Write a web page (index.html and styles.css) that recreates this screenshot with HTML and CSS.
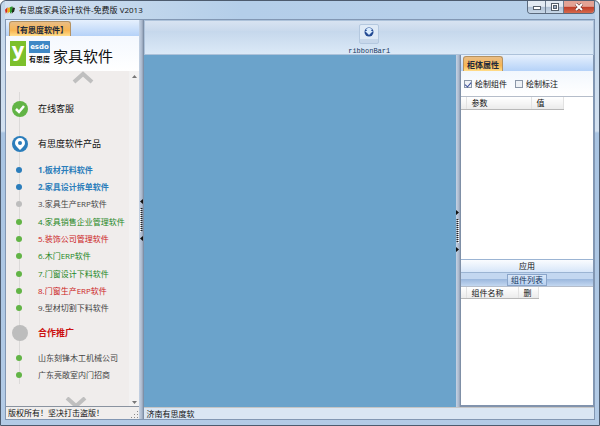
FILE: index.html
```html
<!DOCTYPE html>
<html lang="zh-CN">
<head>
  <meta charset="UTF-8">
  <title>有思度家具设计软件</title>
  <link rel="stylesheet" href="styles.css">
</head>
<body>
<div class="window">
  <header class="titlebar">
    <svg class="app-icon" width="10" height="9" viewBox="0 0 12 10">
      <path d="M0 4l3-3v5l-2 3z" fill="#d92b1c"/>
      <path d="M3 2l3-1v5l-3 3z" fill="#e8b21c"/>
      <path d="M6 1l3-1v6l-3 3z" fill="#2d9b2f"/>
      <path d="M9 1l3 1-1 4-3 3z" fill="#222a1c"/>
    </svg>
    <h1 class="title">有思度家具设计软件-免费版 V2013</h1>
    <div class="win-buttons">
      <button class="win-btn" aria-label="最小化">
        <svg width="10" height="8" viewBox="0 0 10 8"><rect x="1.500" y="3.500" width="7" height="3" fill="#fff" stroke="#56606c"/></svg>
      </button>
      <button class="win-btn" aria-label="最大化">
        <svg width="10" height="8" viewBox="0 0 10 8"><rect x="1.500" y=".5" width="7" height="7" fill="#fff" stroke="#56606c"/><rect x="3.500" y="2.500" width="3" height="3" fill="#9fb0c4" stroke="#56606c"/></svg>
      </button>
      <button class="win-btn win-close" aria-label="关闭">
        <svg width="10" height="8" viewBox="0 0 10 8"><path d="M2 1l6 6M8 1L2 7" stroke="#5a2a2a" stroke-width="3"/><path d="M2 1l6 6M8 1L2 7" stroke="#fff" stroke-width="2"/></svg>
      </button>
    </div>
  </header>

  <div class="content">
    <aside class="sidebar">
      <div class="tabs"><button class="tab">【有思度软件】</button></div>
      <div class="brand">
        <span class="brand-y">y</span>
        <span class="brand-small">
          <span class="brand-esdo">esdo</span>
          <span class="brand-cn">有思度</span>
        </span>
        <span class="brand-name">家具软件</span>
      </div>
      <div class="nav">
        <div class="nav-main">
          <svg class="arrow" width="22" height="13" viewBox="0 0 22 13"><path d="M2 11l9-8 9 8" fill="none" stroke="#bfbfbf" stroke-width="4"/></svg>
          <ul class="timeline">
            <li class="group">
              <svg class="mark" width="16" height="16" viewBox="0 0 16 16"><circle cx="8" cy="8" r="8" fill="#62b446"/><path d="M4 8l3 3 5-6" fill="none" stroke="#fff" stroke-width="2.500"/></svg>
              <a href="#">在线客服</a>
            </li>
            <li class="group">
              <svg class="mark" width="16" height="16" viewBox="0 0 16 16"><circle cx="8" cy="8" r="8" fill="#2b7dbb"/><path d="M8 14C5 11 3 9.500 3 7a5 5 0 0 1 10 0c0 2.500-2 4-5 7z" fill="#fff"/><circle cx="8" cy="7" r="2" fill="#2b7dbb"/></svg>
              <a href="#">有思度软件产品</a>
            </li>
            <li class="item blue"><i class="dot"></i><a href="#">1.板材开料软件</a></li>
            <li class="item blue"><i class="dot"></i><a href="#">2.家具设计拆单软件</a></li>
            <li class="item gray"><i class="dot"></i><a href="#">3.家具生产ERP软件</a></li>
            <li class="item green"><i class="dot"></i><a href="#">4.家具销售企业管理软件</a></li>
            <li class="item red"><i class="dot"></i><a href="#">5.装饰公司管理软件</a></li>
            <li class="item green"><i class="dot"></i><a href="#">6.木门ERP软件</a></li>
            <li class="item green"><i class="dot"></i><a href="#">7.门窗设计下料软件</a></li>
            <li class="item red"><i class="dot"></i><a href="#">8.门窗生产ERP软件</a></li>
            <li class="item"><i class="dot"></i><a href="#">9.型材切割下料软件</a></li>
            <li class="group promo">
              <svg class="mark" width="16" height="16" viewBox="0 0 16 16"><circle cx="8" cy="8" r="8" fill="#bdbdbd"/></svg>
              <a href="#">合作推广</a>
            </li>
            <li class="item"><i class="dot"></i><a href="#">山东刻锋木工机械公司</a></li>
            <li class="item"><i class="dot"></i><a href="#">广东亮敞室内门招商</a></li>
          </ul>
          <svg class="arrow arrow-down" width="22" height="9" viewBox="0 0 22 9"><path d="M2 1l9 8 9-8" fill="none" stroke="#bfbfbf" stroke-width="4"/></svg>
        </div>
        <div class="scrollbar">
          <svg width="5" height="3" viewBox="0 0 5 3"><path d="M0 3l2.500-3L5 3z" fill="#777"/></svg>
          <svg width="5" height="3" viewBox="0 0 5 3"><path d="M0 0l2.500 3L5 0z" fill="#777"/></svg>
        </div>
      </div>
      <div class="status">
        <span>版权所有！坚决打击盗版！</span>
        <svg width="8" height="8" viewBox="0 0 8 8"><path d="M6 0h1v1h-1zM3 3h1v1h-1zM6 3h1v1h-1zM0 6h1v1h-1zM3 6h1v1h-1zM6 6h1v1h-1z" fill="#8a8a8a"/></svg>
      </div>
    </aside>

    <div class="splitter">
      <svg width="4" height="42" viewBox="0 0 4 42"><path d="M4 0v5L1 2.500zM4 37v5L1 39.500z" fill="#111"/><path d="M1.500 9v24" stroke="#fff" stroke-width="1"/><path d="M2.500 9v24" stroke="#222" stroke-width="2" stroke-dasharray="1 1"/></svg>
    </div>

    <div class="workspace">
      <div class="ribbon">
        <button class="ribbon-btn" aria-label="ribbonBar1">
          <svg width="10" height="10" viewBox="0 0 10 10"><circle cx="5" cy="5" r="4.500" fill="#244b94"/><path d="M2 2l2-1h2l2 1-1 2h2L5 8 1 4h2z" fill="#d9ecff"/></svg>
        </button>
        <span class="ribbon-label">ribbonBar1</span>
      </div>
      <div class="work">
        <main class="canvas"></main>
        <div class="splitter">
          <svg width="4" height="42" viewBox="0 0 4 42"><path d="M0 0v5l3-2.500zM0 37v5l3-2.500z" fill="#111"/><path d="M2.500 9v24" stroke="#fff" stroke-width="1"/><path d="M1.500 9v24" stroke="#222" stroke-width="2" stroke-dasharray="1 1"/></svg>
        </div>
        <aside class="props">
          <div class="tabs"><button class="tab tab-props">柜体属性</button></div>
          <div class="checks">
            <label><input type="checkbox" checked>绘制组件</label>
            <label><input type="checkbox">绘制标注</label>
          </div>
          <div class="grid-box params">
            <table class="grid">
              <tr><th class="handle"></th><th class="col-param">参数</th><th class="col-value">值</th></tr>
            </table>
          </div>
          <button class="apply">应用</button>
          <div class="list-head"><button class="list-title">组件列表</button></div>
          <div class="grid-box parts">
            <table class="grid">
              <tr><th class="handle"></th><th class="col-name">组件名称</th><th class="col-del">删</th></tr>
            </table>
          </div>
        </aside>
      </div>
      <footer class="footer">济南有思度软</footer>
    </div>
  </div>
</div>
</body>
</html>
```

FILE: styles.css
```css
* {
  box-sizing: border-box;
  margin: 0;
  padding: 0;
}
html,
body {
  height: 100%;
}
body {
  font: 8px/12px "Open Sans", "Noto Sans CJK SC", sans-serif;
  color: #111;
  overflow: hidden;
}
button {
  font: inherit;
  color: inherit;
  border: 0;
  background: none;
}
a {
  color: inherit;
  text-decoration: none;
}
ul {
  list-style: none;
}
svg {
  display: block;
  flex: none;
}

.window {
  display: flex;
  flex-direction: column;
  height: 100vh;
  padding: 0 4px 5px;
  border: 1px solid #4d5b6e;
  border-radius: 6px 6px 0 0;
  background: linear-gradient(#c2d6eb, #d3e1f0 130px, #a9c4e2 132px, #b3cbe6);
}

/* title bar */
.titlebar {
  display: flex;
  align-items: center;
  height: 18px;
  flex: none;
  background: linear-gradient(90deg, #d3e1f0, #b4cee9 40%, #b8d0e9);
}
.app-icon {
  margin-right: 4px;
}
.title {
  flex: 1;
  font-size: 8px;
  font-weight: normal;
  line-height: 16px;
}
.win-buttons {
  display: flex;
  align-self: flex-start;
  height: 13px;
  border: 1px solid #5b6a7d;
  border-top: 0;
  border-radius: 0 0 4px 4px;
  overflow: hidden;
}
.win-btn {
  display: flex;
  align-items: center;
  justify-content: center;
  width: 18px;
  border-right: 1px solid #6c7b8e;
  background: linear-gradient(#e2eaf3 45%, #aebfd3 50%, #c9d8e8);
}
.win-close {
  width: 30px;
  border-right: 0;
  background: linear-gradient(#e3a294 45%, #bf3b26 50%, #d5694d);
}

.content {
  display: flex;
  flex: 1;
  min-height: 0;
  border: 1px solid #8297b3;
}

/* left side */
.sidebar {
  display: flex;
  flex-direction: column;
  flex: 0 0 22.7%;
  min-width: 0;
}
.tabs {
  display: flex;
  align-items: flex-end;
  height: 16px;
  flex: none;
  padding-left: 3px;
  background: linear-gradient(#e6f0fd, #b5d2f8);
}
.tab {
  height: 15px;
  padding: 0 2px;
  border: 1px solid #b69260;
  border-bottom: 0;
  border-radius: 3px 3px 0 0;
  background: linear-gradient(#e9bd86, #f7b553 60%, #ffdd8a);
  font-weight: bold;
  line-height: 13px;
  color: #222a3c;
}
.tab-props {
  margin-left: -1px;
  padding: 0 3px;
}
.brand {
  display: flex;
  align-items: center;
  gap: 3px;
  height: 35px;
  flex: none;
  padding-left: 4px;
  background: linear-gradient(#f4f8fe, #fff);
  white-space: nowrap;
}
.brand-y {
  width: 16px;
  height: 25px;
  background: #7cc02c;
  color: #fff;
  font: bold 20px/18px "DejaVu Sans", sans-serif;
  text-align: center;
}
.brand-small {
  display: flex;
  flex-direction: column;
  width: 21px;
}
.brand-esdo {
  height: 12px;
  background: #3f88c5;
  color: #fff;
  font: bold 7px/12px "DejaVu Sans", sans-serif;
  text-align: center;
}
.brand-cn {
  font-size: 7px;
  font-weight: bold;
  line-height: 13px;
}
.brand-name {
  font-size: 15px;
  line-height: 24px;
  padding-top: 5px;
}
.nav {
  display: flex;
  flex: 1;
  min-height: 0;
  background: #f0edec;
}
.nav-main {
  display: flex;
  flex-direction: column;
  flex: 1;
  min-width: 0;
}
.arrow {
  margin: 0 0 8px 66px;
}
.arrow-down {
  margin: 13px 0 0 59px;
}
.timeline {
  display: flex;
  flex-direction: column;
  flex: 1;
  min-height: 0;
  padding-left: 6px;
  background: linear-gradient(#dcdad9, #dcdad9) 13px 0 / 1px 100% no-repeat;
}
.group,
.item {
  display: flex;
  align-items: center;
  white-space: nowrap;
}
.group {
  flex: 34 1 0;
  gap: 10px;
  font-size: 9px;
}
.item {
  flex: 17 1 0;
  gap: 16px;
  padding-left: 4px;
  color: #444;
}
.dot {
  width: 6px;
  height: 6px;
  border-radius: 50%;
  background: #62b446;
}
.blue {
  color: #2b7dbb;
  font-weight: bold;
}
.blue .dot {
  background: #2b7dbb;
}
.gray .dot {
  background: #bdbdbd;
}
.green {
  color: #1c861c;
}
.red {
  color: #cc1c1c;
}
.promo {
  flex-grow: 32;
  color: #cc1010;
  font-weight: bold;
}
.scrollbar {
  display: flex;
  flex-direction: column;
  justify-content: space-between;
  align-items: center;
  width: 10px;
  padding: 4px 0 2px;
  background: #f3f2f2;
}
.status {
  display: flex;
  align-items: flex-end;
  justify-content: space-between;
  height: 13px;
  flex: none;
  padding-left: 2px;
  border-top: 1px solid #8a93a0;
  background: #f0eeed;
  white-space: nowrap;
}

.splitter {
  display: flex;
  align-items: center;
  width: 5px;
  flex: none;
  background: linear-gradient(90deg, #c5d3e5, #a9b6ca 60%, #71839b);
}

/* right side */
.workspace {
  display: flex;
  flex-direction: column;
  flex: 1;
  min-width: 0;
}
.ribbon {
  display: flex;
  flex-direction: column;
  align-items: center;
  height: 35px;
  flex: none;
  padding-top: 3px;
  border: 1px solid #adc2da;
  background: linear-gradient(#d8e3f1, #c9d9ec 30%, #c6d8ec 32%, #dbe9f7);
}
.ribbon-btn {
  display: flex;
  align-items: center;
  justify-content: center;
  width: 20px;
  height: 20px;
  flex: none;
  padding-bottom: 4px;
  border: 1px solid #b4c8df;
  border-radius: 2px;
  background: linear-gradient(#dfeaf6 75%, #c7d7ea 80%);
}
.ribbon-label {
  font: 7px/14px "Liberation Mono", monospace;
  color: #17375e;
}
.work {
  display: flex;
  flex: 1;
  min-height: 0;
}
.canvas {
  flex: 1;
  background: #6ba3cb;
}
.props {
  display: flex;
  flex-direction: column;
  flex: 0 0 29.6%;
  min-width: 0;
  border-right: 1px solid #8297b3;
  border-bottom: 2px solid #8193ad;
}
.checks {
  display: flex;
  gap: 8px;
  height: 25px;
  flex: none;
  padding-left: 3px;
  background: linear-gradient(#f2f7fd, #fff);
}
.checks label {
  display: flex;
  align-items: center;
  gap: 3px;
}
.checks input {
  appearance: none;
  display: flex;
  align-items: center;
  justify-content: center;
  width: 8px;
  height: 8px;
  border: 1px solid #8b97a8;
  background: #eef1f5;
}
.checks input:checked::after {
  content: "";
  width: 3px;
  height: 5px;
  border: solid #3b4f9c;
  border-width: 0 1px 1px 0;
  transform: rotate(40deg);
}
.grid-box {
  background: #fff;
  border-top: 1px solid #b5bdca;
}
.params {
  flex: 164 1 0;
}
.parts {
  flex: 120 1 0;
}
.grid {
  border-collapse: collapse;
}
.grid th {
  height: 12px;
  padding: 0 4px;
  border-right: 1px solid #e2e2e2;
  border-bottom: 1px solid #b8b8b8;
  background: linear-gradient(#fff, #ebebeb);
  font-weight: normal;
  line-height: 11px;
  text-align: left;
}
.grid .handle {
  width: 6px;
  padding: 0;
}
.col-param {
  width: 65px;
}
.col-value {
  width: 32px;
}
.col-name {
  width: 52px;
}
.col-del {
  width: 20px;
}
.apply {
  height: 14px;
  flex: none;
  border-top: 1px solid #9bb4d3;
  border-bottom: 1px solid #9bb4d3;
  background: linear-gradient(#fafcff, #d7e6f9);
}
.list-head {
  display: flex;
  justify-content: center;
  height: 13px;
  flex: none;
  padding-top: 1px;
  background: linear-gradient(#c3d7f0 45%, #9db9de 50%, #c3d7f0);
}
.list-title {
  padding: 0 3px;
  border: 1px solid #8aa5ca;
  background: linear-gradient(#d9e7f8, #b9d1f0);
  line-height: 10px;
  color: #17375e;
}
.footer {
  height: 12px;
  flex: none;
  padding-left: 2px;
  border-top: 1px solid #c6c6c6;
  background: #dae6f3;
  line-height: 12px;
}
```
